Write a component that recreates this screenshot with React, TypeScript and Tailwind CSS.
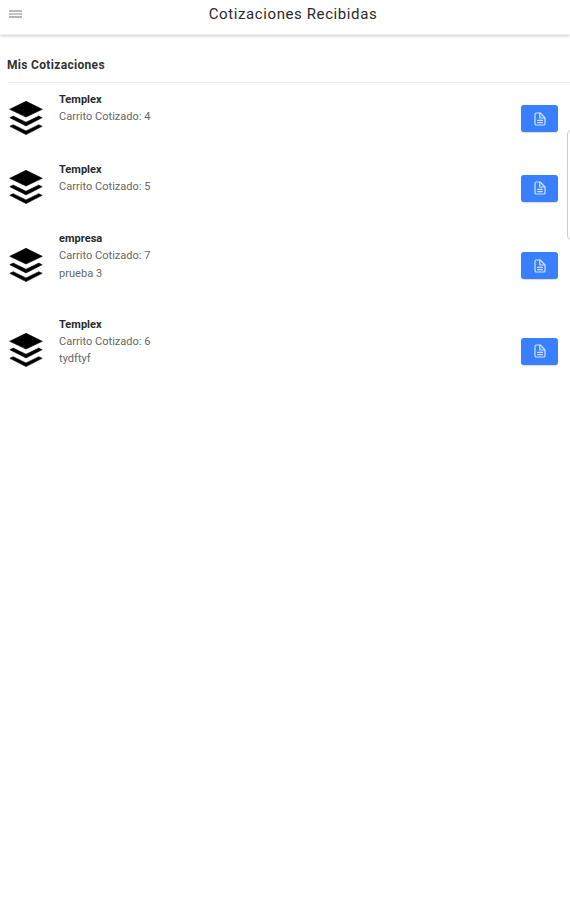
"use client"

interface Quote {
  id: number
  company: string
  cart: number
  note?: string
}

const quotes: Quote[] = [
  { id: 1, company: "Templex", cart: 4 },
  { id: 2, company: "Templex", cart: 5 },
  { id: 3, company: "empresa", cart: 7, note: "prueba 3" },
  { id: 4, company: "Templex", cart: 6, note: "tydftyf" },
]

function LayersIcon() {
  return (
    <svg
      viewBox="0 0 34 34"
      className="mb-[0.5px] h-[34px] w-[34px] shrink-0"
      fill="currentColor"
      stroke="currentColor"
      strokeWidth="0.6"
      strokeLinejoin="round"
      aria-hidden="true"
    >
      <path d="M17 .3 33.300 8.300 17 16 .7 8.300z" />
      <path d="M.8 16.700 4.200 15.100 17 21.300l12.800-6.200 3.400 1.600L17 24.900z" />
      <path d="M.8 25.300 4.200 23.700 17 29.900l12.800-6.200 3.400 1.600L17 33.600z" />
    </svg>
  )
}

function DocumentIcon() {
  return (
    <svg
      viewBox="0 0 12 14"
      className="h-[14px] w-[12px]"
      fill="none"
      stroke="currentColor"
      strokeWidth="1.2"
      strokeLinejoin="round"
      strokeLinecap="round"
      aria-hidden="true"
    >
      <path d="M2.400 1h3.800L11 6v5.400A1.600 1.600 0 0 1 9.400 13h-7A1.400 1.400 0 0 1 1 11.600V2.400A1.400 1.400 0 0 1 2.400 1z" />
      <path d="M5.800 1.200V6h5M3.600 8.400h4.800M3.600 10.600h4.800" />
    </svg>
  )
}

function QuoteRow({ quote }: { quote: Quote }) {
  return (
    <li className={quote.note ? "flex h-[85.5px] items-center" : "flex h-[69.5px] items-center"}>
      <LayersIcon />
      <div className="ml-4 flex-1 self-start pt-2 text-[11px] leading-[17.3px] tracking-[0.03px] text-[#666]">
        <h2 className="font-bold text-[#2a2a2a]">{quote.company}</h2>
        <p>Carrito Cotizado: {quote.cart}</p>
        {quote.note && <p>{quote.note}</p>}
      </div>
      <button
        type="button"
        aria-label="Ver documento"
        className="mt-0.5 flex h-[27px] w-[37px] items-center justify-center rounded-[3px] bg-[#3880ff] text-[#d3e3ff] shadow-[0_1px_1px_rgba(0,0,0,0.15)]"
      >
        <DocumentIcon />
      </button>
    </li>
  )
}

export default function App() {
  return (
    <div className="relative h-[900px] overflow-hidden bg-white font-[Roboto,sans-serif]">
      {/* Toolbar */}
      <header className="grid h-[35px] grid-cols-[1fr_auto_1fr] items-start border-b border-[#eee] shadow-[0_1px_3px_rgba(0,0,0,0.2)]">
        <button type="button" aria-label="Menú" className="mt-[10px] ml-[9px] flex w-[13px] flex-col gap-px">
          <span className="h-[2px] w-full bg-[#b8b8b8]" />
          <span className="h-[2px] w-full bg-[#c4c4c4]" />
          <span className="h-[2px] w-full bg-[#b4b4b4]" />
        </button>
        <h1 className="mr-[-16px] pt-[4px] text-[15px] leading-5 tracking-[0.6px] text-[#2a2a2a]">
          Cotizaciones Recibidas
        </h1>
      </header>

      {/* List */}
      <main>
        <div className="ml-[7px] flex h-[48px] items-center border-b border-[#f0f0f0] pt-[13px] text-[12px] font-bold tracking-[0.32px] text-[#333]">
          Mis Cotizaciones
        </div>
        <ul className="pr-3 pl-[9px]">
          {quotes.map((quote) => (
            <QuoteRow key={quote.id} quote={quote} />
          ))}
        </ul>
      </main>

      {/* Edge handle over the list */}
      <div className="absolute top-[130px] right-[-6px] h-[110px] w-[9px] rounded-l-[4px] border border-[#ccc] bg-white" />
    </div>
  )
}
